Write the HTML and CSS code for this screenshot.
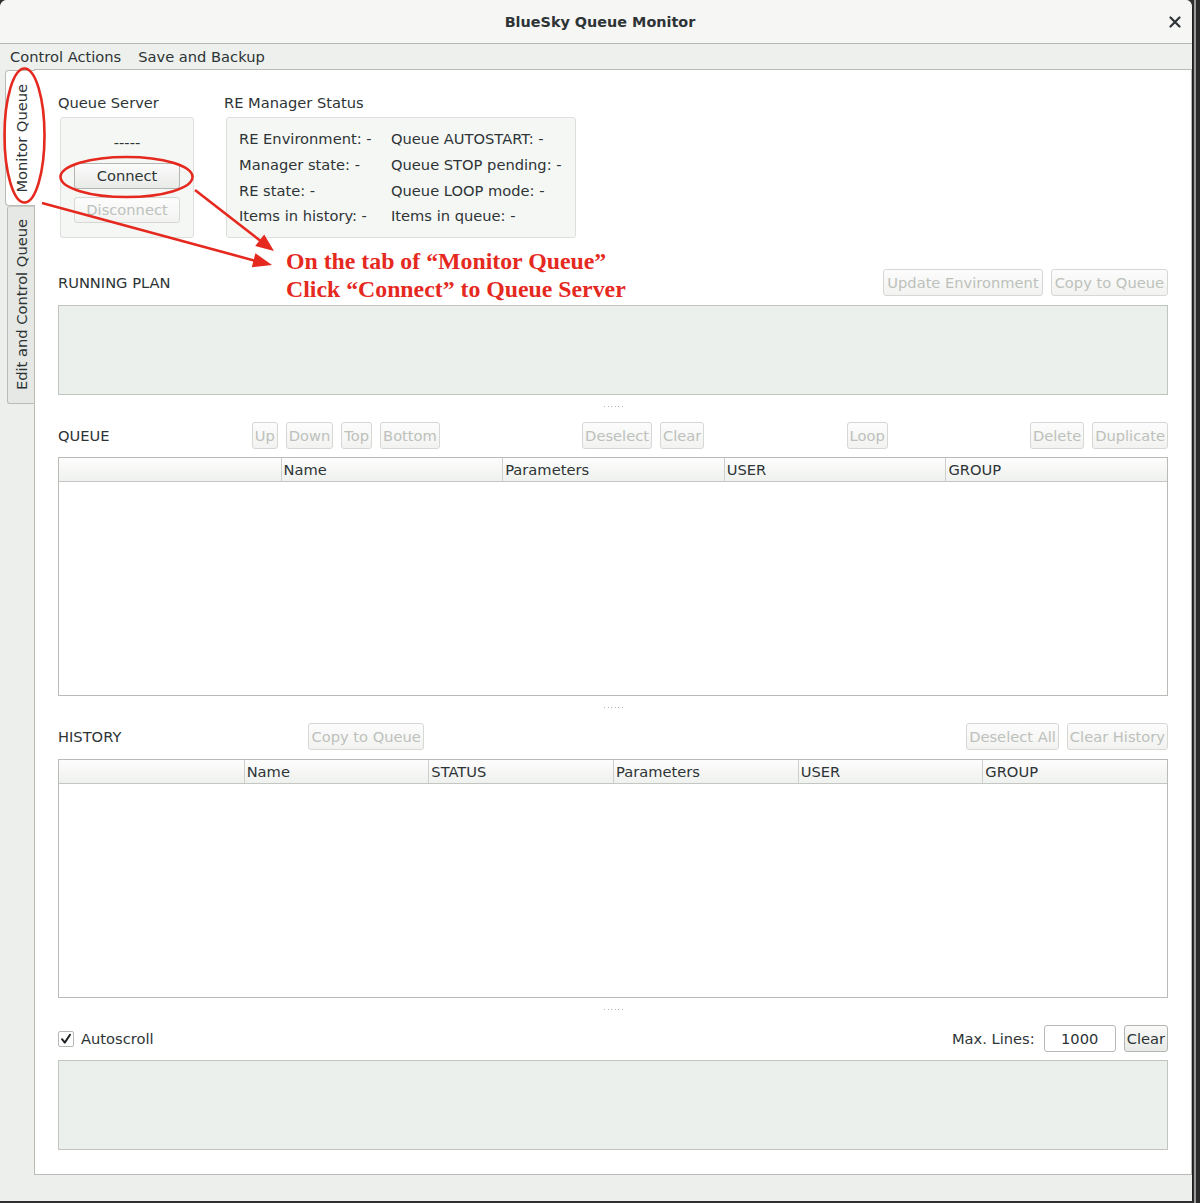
FILE: index.html
```html
<!DOCTYPE html>
<html>
<head>
<meta charset="utf-8">
<title>BlueSky Queue Monitor</title>
<link rel="stylesheet" href="styles.css">
</head>
<body>
<div class="screen">
  <div class="window">
    <div class="titlebar">
      <span></span>
      <span class="title">BlueSky Queue Monitor</span>
      <svg class="close" width="12" height="12" viewBox="0 0 12 12"><path d="M1.5 1.5 L10.5 10.5 M10.5 1.5 L1.5 10.5" stroke="#2e3436" stroke-width="2.2" stroke-linecap="round"/></svg>
    </div>
    <div class="menubar">
      <span class="menu-item">Control Actions</span>
      <span class="menu-item">Save and Backup</span>
    </div>
    <div class="main">
      <div class="tabs">
        <div class="tab tab-active"><span class="tab-text">Monitor Queue</span></div>
        <div class="tab tab-inactive"><span class="tab-text">Edit and Control Queue</span></div>
      </div>
      <div class="pane">
        <div class="top-row">
          <div class="group">
            <div class="group-label">Queue Server</div>
            <div class="group-box qs-box">
              <div class="qs-status">-----</div>
              <button class="btn btn-wide">Connect</button>
              <button class="btn btn-wide" disabled>Disconnect</button>
            </div>
          </div>
          <div class="group">
            <div class="group-label">RE Manager Status</div>
            <div class="group-box re-box">
              <div class="re-cell">RE Environment: -</div>
              <div class="re-cell">Queue AUTOSTART: -</div>
              <div class="re-cell">Manager state: -</div>
              <div class="re-cell">Queue STOP pending: -</div>
              <div class="re-cell">RE state: -</div>
              <div class="re-cell">Queue LOOP mode: -</div>
              <div class="re-cell">Items in history: -</div>
              <div class="re-cell">Items in queue: -</div>
            </div>
          </div>
        </div>

        <div class="section-row plan-row">
          <span class="section-label">RUNNING PLAN</span>
          <span class="spacer"></span>
          <div class="btn-group">
            <button class="btn" disabled>Update Environment</button>
            <button class="btn" disabled>Copy to Queue</button>
          </div>
        </div>
        <div class="text-box plan-box"></div>
        <div class="splitter"><span class="dots"></span></div>

        <div class="section-row queue-row">
          <span class="section-label">QUEUE</span>
          <div class="btn-group">
            <button class="btn btn-tight" disabled>Up</button>
            <button class="btn btn-tight" disabled>Down</button>
            <button class="btn btn-tight" disabled>Top</button>
            <button class="btn btn-tight" disabled>Bottom</button>
          </div>
          <div class="btn-group">
            <button class="btn btn-tight" disabled>Deselect</button>
            <button class="btn btn-tight" disabled>Clear</button>
          </div>
          <div class="btn-group">
            <button class="btn btn-tight" disabled>Loop</button>
          </div>
          <div class="btn-group">
            <button class="btn btn-tight" disabled>Delete</button>
            <button class="btn btn-tight" disabled>Duplicate</button>
          </div>
        </div>
        <div class="table queue-table">
          <div class="thead cols-5">
            <div class="th"></div>
            <div class="th">Name</div>
            <div class="th">Parameters</div>
            <div class="th">USER</div>
            <div class="th">GROUP</div>
          </div>
          <div class="tbody"></div>
        </div>
        <div class="splitter"><span class="dots"></span></div>

        <div class="section-row history-row">
          <span class="section-label">HISTORY</span>
          <span class="spacer spacer-a"></span>
          <button class="btn btn-tight" disabled>Copy to Queue</button>
          <span class="spacer spacer-b"></span>
          <div class="btn-group">
            <button class="btn btn-tight" disabled>Deselect All</button>
            <button class="btn btn-tight" disabled>Clear History</button>
          </div>
        </div>
        <div class="table history-table">
          <div class="thead cols-6">
            <div class="th"></div>
            <div class="th">Name</div>
            <div class="th">STATUS</div>
            <div class="th">Parameters</div>
            <div class="th">USER</div>
            <div class="th">GROUP</div>
          </div>
          <div class="tbody"></div>
        </div>
        <div class="splitter"><span class="dots"></span></div>

        <div class="section-row">
          <span class="checkbox"><svg width="14" height="14" viewBox="0 0 14 14"><path d="M3 7.2 L5.8 10.6 L11 2.8" fill="none" stroke="#1f2426" stroke-width="2" stroke-linecap="round" stroke-linejoin="round"/></svg></span>
          <span class="check-label">Autoscroll</span>
          <span class="spacer"></span>
          <span class="maxlines-label">Max. Lines:</span>
          <span class="line-input">1000</span>
          <button class="btn btn-clear">Clear</button>
        </div>
        <div class="text-box log-box"></div>
      </div>
    </div>
  </div>

  <svg class="annot" width="1200" height="1203" viewBox="0 0 1200 1203">
    <g fill="none" stroke="#e5291f" stroke-width="2.6">
      <ellipse cx="24.5" cy="135.5" rx="20" ry="67"/>
      <ellipse cx="126.5" cy="177" rx="66" ry="20"/>
      <path d="M42 203 L256 261"/>
      <path d="M195 190 L262 242"/>
    </g>
    <g fill="#e5291f">
      <polygon points="272,265 255.4,253.2 251.8,267.3"/>
      <polygon points="274,251 255.2,246 264.2,234.4"/>
    </g>
  </svg>
  <div class="annot-text">On the tab of “Monitor Queue”<br>Click “Connect” to Queue Server</div>
</div>
</body>
</html>
```

FILE: styles.css
```css
* { box-sizing: border-box; }
html, body { margin: 0; padding: 0; }
body {
  width: 1200px;
  height: 1203px;
  overflow: hidden;
  background: #2f2f2f;
  font-family: "DejaVu Sans", "Liberation Sans", sans-serif;
  font-size: 14.67px;
  color: #2e3436;
}
.screen {
  position: relative;
  width: 1200px;
  height: 1203px;
  background: linear-gradient(to right, #2f2f2f 1194px, #9a9a9a 1194px, #9a9a9a 1196px, #2b2b2b 1196px);
}
.window {
  width: 1193px;
  height: 1201px;
  background: #edefec;
  border-right: 1px solid #1e1e1e;
  border-radius: 7px 7px 0 0;
  overflow: hidden;
  display: flex;
  flex-direction: column;
}
.titlebar {
  flex: none;
  height: 44px;
  background: #f6f6f5;
  border-bottom: 1px solid #b7b8b5;
  display: grid;
  grid-template-columns: 1fr auto 1fr;
  align-items: center;
}
.title {
  font-weight: bold;
  font-size: 14.4px;
  color: #2e3436;
  padding-left: 8px;
}
.close {
  justify-self: end;
  margin-right: 11px;
  margin-top: 1px;
}
.menubar {
  flex: none;
  height: 25px;
  display: flex;
  align-items: center;
  padding-left: 10px;
  gap: 17px;
  background: #edf0ec;
  padding-bottom: 1px;
}
.menu-item { color: #2e3436; }
.main {
  flex: 1;
  display: flex;
  min-height: 0;
}
.tabs {
  flex: none;
  width: 35px;
  margin-right: -1px;
  position: relative;
  z-index: 1;
  display: flex;
  flex-direction: column;
  align-items: flex-end;
  padding-top: 1px;
}
.tab {
  display: flex;
  align-items: center;
  justify-content: center;
  border: 1px solid #b9bbb7;
  border-right: none;
}
.tab-active {
  width: 30px;
  height: 136px;
  background: #ffffff;
  border-radius: 4px 0 0 4px;
}
.tab-inactive {
  width: 27px;
  height: 198px;
  margin-right: 1px;
  background: #e5e8e4;
  border-radius: 3px 0 0 3px;
  border-top-color: #c9cbc7;
}
.tab-text {
  writing-mode: vertical-rl;
  transform: rotate(180deg);
  white-space: nowrap;
  line-height: 17px;
}
.tab-active .tab-text { margin-left: 1px; }
.pane {
  flex: 1;
  background: #ffffff;
  border: 1px solid #b9bbb7;
  margin-bottom: 26px;
  padding: 24px 23px 22px 23px;
  display: flex;
  flex-direction: column;
}
.top-row {
  display: flex;
  gap: 30px;
}
.group-label {
  height: 17px;
  line-height: 17px;
  margin-bottom: 6px;
}
.group-box {
  margin-left: 2px;
  background: #f5f7f5;
  border: 1px solid #dcdfdb;
  border-radius: 3px;
}
.qs-box {
  width: 134px;
  height: 121px;
  padding: 14px 12px 0 12px;
  display: flex;
  flex-direction: column;
  align-items: center;
}
.qs-status {
  height: 22px;
  line-height: 22px;
  margin-bottom: 9px;
}
.btn {
  font-family: inherit;
  font-size: 14.67px;
  height: 27px;
  padding: 0 3px;
  border: 1px solid #c2c4c0;
  border-radius: 3px;
  background: linear-gradient(#fafbfa, #eceeeb);
  color: #2e3436;
  white-space: nowrap;
  line-height: 25px;
}
.btn-tight { padding: 0 2px; }
.btn:disabled {
  color: #bdc1bb;
  border-color: #d6d8d4;
  background: linear-gradient(#fcfcfc, #f2f3f1);
}
.btn-wide {
  width: 106px;
  height: 26px;
  line-height: 24px;
  margin-bottom: 8px;
}
.btn-wide:not(:disabled) {
  border-color: #b3b5b1;
  background: linear-gradient(#fbfbfb, #e9ebe8);
}
.re-box {
  width: 350px;
  height: 121px;
  padding: 8px 0 0 12px;
  display: grid;
  grid-template-columns: 152px auto;
  grid-auto-rows: 25.7px;
  align-items: center;
}
.re-cell { white-space: nowrap; }
.section-row {
  height: 27px;
  display: flex;
  align-items: center;
  flex: none;
}
.history-row {
  height: 28px;
  align-items: flex-start;
}
.history-row .section-label { line-height: 27px; }
.plan-row { margin-top: 31px; }
.queue-row { justify-content: space-between; }
.spacer { flex: 1; }
.spacer-a { flex: 187; }
.spacer-b { flex: 542; }
.btn-group {
  display: flex;
  gap: 8px;
}
.text-box {
  flex: none;
  background: #ecf0ec;
  border: 1px solid #c2c4c0;
}
.plan-box {
  margin-top: 9px;
  height: 90px;
}
.log-box {
  margin-top: 8px;
  height: 90px;
}
.splitter {
  flex: none;
  height: 27px;
  display: flex;
  justify-content: center;
  padding-top: 11px;
}
.dots {
  width: 20px;
  height: 1px;
  background: repeating-linear-gradient(to right, #b4b6b2 0 1px, transparent 1px 3.5px);
  margin-left: 1px;
}
.table {
  flex: none;
  margin-top: 8px;
  height: 239px;
  border: 1px solid #b9bbb7;
  display: flex;
  flex-direction: column;
  background: #ffffff;
}
.thead {
  height: 24px;
  display: grid;
  background: linear-gradient(#fdfdfd, #eff1ee);
  border-bottom: 1px solid #c4c6c2;
}
.cols-5 { grid-template-columns: repeat(5, 1fr); }
.cols-6 { grid-template-columns: repeat(6, 1fr); }
.th {
  line-height: 23px;
  padding-left: 2px;
  border-left: 1px solid #cdd0cc;
  white-space: nowrap;
}
.th:first-child { border-left: none; }
.tbody { flex: 1; }
.checkbox {
  width: 16px;
  height: 16px;
  border: 1px solid #b6b8b4;
  border-radius: 2px;
  background: #ffffff;
  display: flex;
  align-items: center;
  justify-content: center;
}
.check-label { margin-left: 7px; }
.maxlines-label { margin-right: 9px; }
.line-input {
  width: 72px;
  height: 27px;
  line-height: 25px;
  text-align: center;
  border: 1px solid #b7b9b5;
  border-radius: 3px;
  background: #ffffff;
}
.btn-clear {
  margin-left: 8px;
  padding: 0 2px;
  border-color: #b3b5b1;
  background: linear-gradient(#f9faf9, #e8eae7);
}
.annot {
  position: absolute;
  left: 0;
  top: 0;
  z-index: 5;
  pointer-events: none;
}
.annot-text {
  position: absolute;
  left: 286px;
  top: 247px;
  z-index: 5;
  font-family: "Liberation Serif", "Times New Roman", serif;
  font-weight: bold;
  font-size: 23.8px;
  line-height: 28px;
  color: #e5291f;
  white-space: nowrap;
}
```
